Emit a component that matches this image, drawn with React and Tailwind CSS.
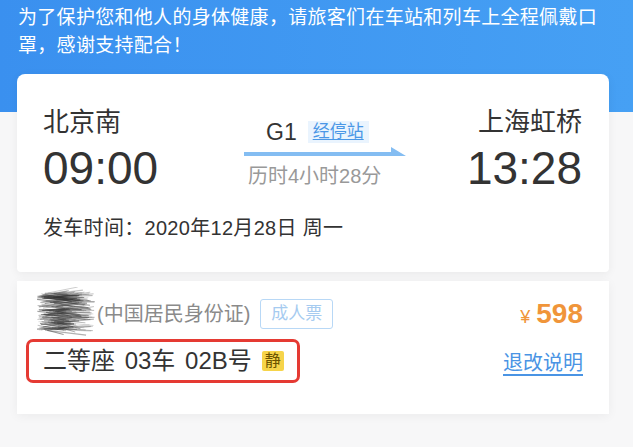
import React from "react";

// scribble that hides the passenger name
function Scribble() {
  let seed = 7;
  const rnd = () => {
    seed = (seed * 9301 + 49297) % 233280;
    return seed / 233280;
  };
  const lines = [];
  for (let i = 0; i < 170; i++) {
    const y = 6 + rnd() * 38;
    const x1 = 2 + rnd() * 22;
    const x2 = 28 + rnd() * 32;
    const dy = (rnd() - 0.5) * 12;
    lines.push(
      <line
        key={i}
        x1={x1}
        y1={y}
        x2={x2}
        y2={y + dy}
        stroke="#333"
        strokeOpacity={0.2 + rnd() * 0.35}
        strokeWidth={0.5 + rnd() * 0.8}
      />
    );
  }
  return (
    <svg width="62" height="50" viewBox="0 0 62 50" className="shrink-0">
      {lines}
    </svg>
  );
}

function Arrow() {
  return (
    <svg width="162" height="10" viewBox="0 0 162 10" className="block">
      <polygon points="0,5 147,5 147,0 162,9 0,9" fill="#84bdf2" />
    </svg>
  );
}

export default function App() {
  return (
    <div
      className="w-[633px] h-[447px] overflow-hidden bg-[#f7f7f8]"
      style={{ fontFamily: '"Liberation Sans", "Noto Sans CJK SC", sans-serif' }}
    >
      {/* 顶部提示 */}
      <div className="h-[112px] bg-gradient-to-r from-[#3a90ef] to-[#46a0f4] px-[18px] pt-[4px] text-white text-[19px] leading-[28px] tracking-[0.3px]">
        为了保护您和他人的身体健康，请旅客们在车站和列车上全程佩戴口
        <br />
        罩，感谢支持配合！
      </div>

      {/* 车次信息 */}
      <div className="ml-[17px] w-[592px] -mt-[38px] h-[198px] bg-white rounded-t-[8px] rounded-b-[4px] shadow-[0_2px_10px_rgba(0,0,0,0.06)] pl-[26px] pr-[27px] pt-[30px] text-[#333]">
        <div className="flex">
          <div className="w-[201px]">
            <div className="text-[26px] leading-[36px]">北京南</div>
            <div className="text-[46px] leading-[52px] mt-[2px]">09:00</div>
          </div>
          <div className="w-[162px] pt-[16px]">
            <div className="flex items-center gap-[11px] pl-[22px]">
              <span className="text-[23px] leading-[24px]">G1</span>
              <span className="bg-[#eaf4fe] text-[#4a97e6] text-[17px] leading-[22px] px-[5px] underline underline-offset-2">
                经停站
              </span>
            </div>
            <div className="mt-[3px]">
              <Arrow />
            </div>
            <div className="text-[20px] leading-[24px] text-[#999] mt-[7px] pl-[4px]">历时4小时28分</div>
          </div>
          <div className="flex-1 flex flex-col items-end">
            <div className="text-[26px] leading-[36px]">上海虹桥</div>
            <div className="text-[46px] leading-[52px] mt-[2px]">13:28</div>
          </div>
        </div>
        <div className="text-[20px] leading-[24px] mt-[22px] tracking-[0.3px]">发车时间：2020年12月28日 周一</div>
      </div>

      {/* 乘客信息 */}
      <div className="ml-[17px] w-[592px] mt-[9px] h-[133px] bg-white shadow-[0_2px_10px_rgba(0,0,0,0.05)] pl-[9px] pr-[26px] pt-[6px]">
        <div className="flex items-start justify-between">
          <div>
            <div className="flex items-center">
              <div className="ml-[9px]">
                <Scribble />
              </div>
              <span className="text-[20px] text-[#8a8a8a] leading-[24px] mt-[4px]">(中国居民身份证)</span>
              <span className="ml-[10px] mt-[4px] border border-[#b8d8f6] rounded-[3px] text-[#a6cbf0] text-[17px] leading-[28px] px-[10px]">
                成人票
              </span>
            </div>
            <div className="mt-[2px] w-[274px] h-[44px] border-[3px] border-[#e53a33] rounded-[7px] flex items-center pl-[14px] text-[24px] text-[#333]">
              <span className="whitespace-pre [word-spacing:3px]">二等座 03车 02B号</span>
              <span className="ml-[10px] bg-[#f6d44a] text-[#6b5300] text-[16px] leading-[20px] px-[3px] rounded-[2px]">静</span>
            </div>
          </div>
          <div className="flex flex-col items-end pt-[11px]">
            <div className="text-[#f0953a] flex items-baseline">
              <span className="text-[18px] mr-[6px]">¥</span>
              <span className="text-[28px] font-bold leading-[32px]">598</span>
            </div>
            <div className="mt-[18px] text-[20px] leading-[28px] text-[#4a94e4] underline underline-offset-4">退改说明</div>
          </div>
        </div>
      </div>
    </div>
  );
}
